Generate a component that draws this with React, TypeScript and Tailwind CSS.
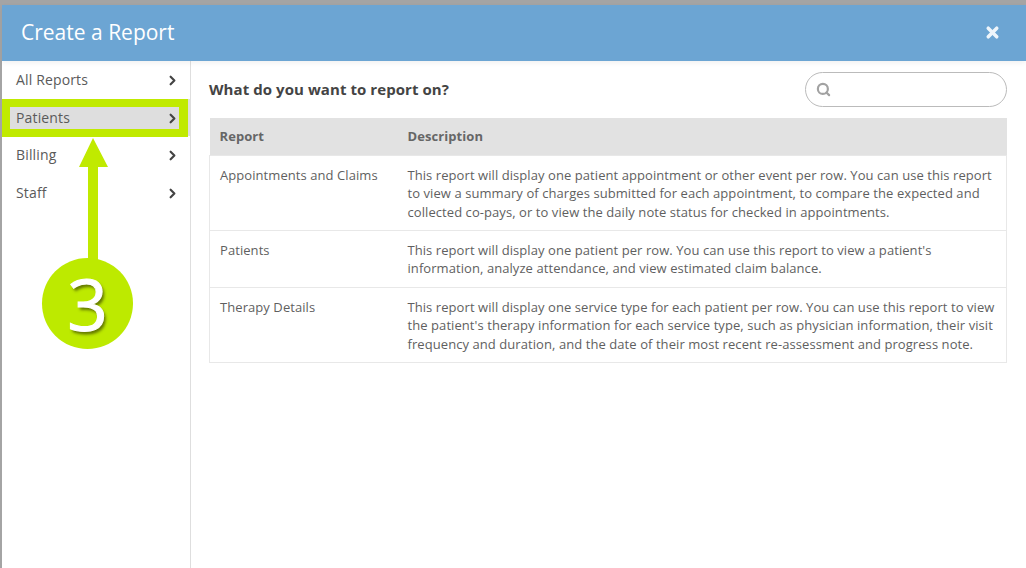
import { ChevronRight, Search, X } from 'lucide-react';

const NAV_ITEMS = ['All Reports', 'Patients', 'Billing', 'Staff'];

const REPORTS = [
  {
    name: 'Appointments and Claims',
    description:
      'This report will display one patient appointment or other event per row. You can use this report to view a summary of charges submitted for each appointment, to compare the expected and collected co-pays, or to view the daily note status for checked in appointments.',
    rowClass: 'h-[75px]',
  },
  {
    name: 'Patients',
    description:
      "This report will display one patient per row. You can use this report to view a patient's information, analyze attendance, and view estimated claim balance.",
    rowClass: 'h-[57px]',
  },
  {
    name: 'Therapy Details',
    description:
      "This report will display one service type for each patient per row. You can use this report to view the patient's therapy information for each service type, such as physician information, their visit frequency and duration, and the date of their most recent re-assessment and progress note.",
    rowClass: 'h-[75px]',
  },
];

function Sidebar() {
  return (
    <aside className="w-[189px] shrink-0 border-r border-[#dedede]">
      {NAV_ITEMS.map((item) => {
        const active = item === 'Patients';
        return (
          <div
            key={item}
            className={`flex h-[37.5px] items-center justify-between pl-[14px] pr-[10px] text-[14px] tracking-[0.15px] text-[#5a5a5a] ${
              active ? 'bg-[#dedede]' : ''
            }`}
          >
            <span>{item}</span>
            <ChevronRight size={15} strokeWidth={3.5} className="mt-[2px] text-[#444]" />
          </div>
        );
      })}
    </aside>
  );
}

function ReportTable() {
  return (
    <table className="w-[798px] table-fixed border-collapse text-[13px] leading-[18.7px] tracking-[0.07px] text-[#5f5f5f]">
      <thead>
        <tr className="h-[37px] bg-[#e2e2e2] text-left font-bold text-[#666]">
          <th className="w-[188px] px-[10px]">Report</th>
          <th className="px-[10px]">Description</th>
        </tr>
      </thead>
      <tbody>
        {REPORTS.map((report) => (
          <tr key={report.name} className={`${report.rowClass} border border-[#e8e8e8] align-top`}>
            <td className="px-[10px] pt-[10px]">{report.name}</td>
            <td className="pl-[10px] pr-[6px] pt-[10px]">{report.description}</td>
          </tr>
        ))}
      </tbody>
    </table>
  );
}

export default function App() {
  return (
    <div className="relative h-[568px] w-[1026px] overflow-hidden bg-[#a4a4a4] pl-[2px] pt-[5px] font-['Open_Sans',sans-serif]">
      <div className="flex h-[563px] flex-col bg-white">
        {/* Header */}
        <header className="relative flex h-[56px] shrink-0 items-center justify-between bg-[#6ca5d3] pl-[19px] pr-[25px] text-white shadow-[0_2px_5px_rgba(0,0,0,0.06)]">
          <h1 className="mt-[-1px] text-[21px] font-normal">Create a Report</h1>
          <X size={17} strokeWidth={5} className="mt-[-1px] text-[#eef5fb]" />
        </header>

        <div className="flex min-h-0 flex-1">
          <Sidebar />

          <main className="flex-1 pl-[18px]">
            <div className="flex h-[57px] items-center justify-between pr-[19px]">
              <h2 className="text-[15px] font-bold tracking-[0.07px] text-[#444]">What do you want to report on?</h2>
              <div className="mt-[-1px] flex h-[35px] w-[202px] items-center rounded-full border border-[#bbbbbb] pl-[10px]">
                <Search size={15} strokeWidth={3.5} className="text-[#a2a2a2]" />
              </div>
            </div>
            <ReportTable />
          </main>
        </div>
      </div>

      {/* Tutorial annotation over the sidebar */}
      <div className="absolute left-[2px] top-[99px] h-[38px] w-[186px] border-y-[8px] border-l-[8px] border-r-[9px] border-[#c0ea00]" />
      <svg className="absolute left-[76px] top-[136px]" width="36" height="126" viewBox="0 0 36 126">
        <path d="M17 2 L32 31 L22 31 L22 125 L12 125 L12 31 L3 31 Z" fill="#c0ea00" />
      </svg>
      <div className="absolute left-[42px] top-[258px] flex h-[91px] w-[91px] items-center justify-center rounded-full bg-[#bdea00] text-[71px] leading-none text-white [text-shadow:2px_3px_3px_rgba(60,70,0,0.7)] [-webkit-text-stroke:1px_white]">
        3
      </div>
    </div>
  );
}
